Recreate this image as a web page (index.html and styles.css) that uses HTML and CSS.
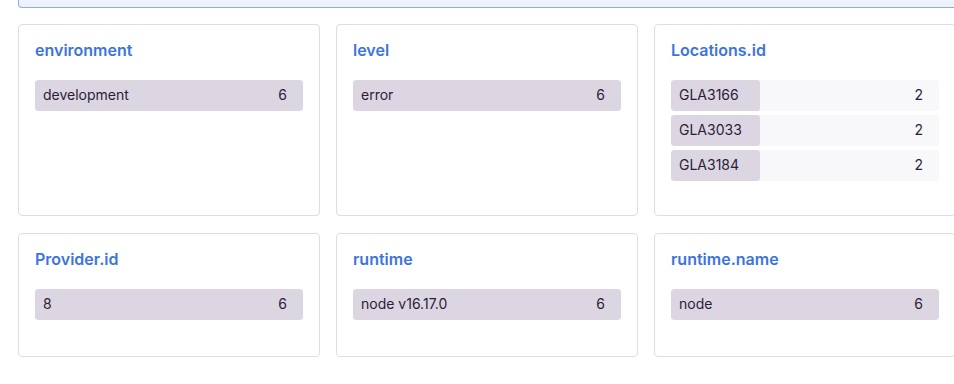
FILE: index.html
```html
<!DOCTYPE html>
<html lang="en">
<head>
  <meta charset="UTF-8">
  <meta name="viewport" content="width=device-width, initial-scale=1.0">
  <title>Tags</title>
  <link rel="stylesheet" href="styles.css">
</head>
<body>
  <div class="page">
    <div class="search-bar"></div>

    <div class="tag-grid">
      <div class="tag-card">
        <h3 class="tag-title">environment</h3>
        <div class="tag-values">
          <div class="tag-row">
            <div class="tag-fill" style="width: 100%"></div>
            <span class="tag-label">development</span>
            <span class="tag-count">6</span>
          </div>
        </div>
      </div>

      <div class="tag-card">
        <h3 class="tag-title">level</h3>
        <div class="tag-values">
          <div class="tag-row">
            <div class="tag-fill" style="width: 100%"></div>
            <span class="tag-label">error</span>
            <span class="tag-count">6</span>
          </div>
        </div>
      </div>

      <div class="tag-card">
        <h3 class="tag-title">Locations.id</h3>
        <div class="tag-values">
          <div class="tag-row">
            <div class="tag-fill" style="width: 33.3%"></div>
            <span class="tag-label">GLA3166</span>
            <span class="tag-count">2</span>
          </div>
          <div class="tag-row">
            <div class="tag-fill" style="width: 33.3%"></div>
            <span class="tag-label">GLA3033</span>
            <span class="tag-count">2</span>
          </div>
          <div class="tag-row">
            <div class="tag-fill" style="width: 33.3%"></div>
            <span class="tag-label">GLA3184</span>
            <span class="tag-count">2</span>
          </div>
        </div>
      </div>

      <div class="tag-card">
        <h3 class="tag-title">Provider.id</h3>
        <div class="tag-values">
          <div class="tag-row">
            <div class="tag-fill" style="width: 100%"></div>
            <span class="tag-label">8</span>
            <span class="tag-count">6</span>
          </div>
        </div>
      </div>

      <div class="tag-card">
        <h3 class="tag-title">runtime</h3>
        <div class="tag-values">
          <div class="tag-row">
            <div class="tag-fill" style="width: 100%"></div>
            <span class="tag-label">node v16.17.0</span>
            <span class="tag-count">6</span>
          </div>
        </div>
      </div>

      <div class="tag-card">
        <h3 class="tag-title">runtime.name</h3>
        <div class="tag-values">
          <div class="tag-row">
            <div class="tag-fill" style="width: 100%"></div>
            <span class="tag-label">node</span>
            <span class="tag-count">6</span>
          </div>
        </div>
      </div>
    </div>
  </div>
</body>
</html>
```

FILE: styles.css
```css
body {
  margin: 0;
  background: #fff;
  font-family: Inter, "Noto Sans", sans-serif;
  color: #2b1d38;
  overflow: hidden;
}

.page {
  padding: 0 0 0 18px;
  width: 938px;
}

/* bottom edge of the search box that sits above */
.search-bar {
  height: 7px;
  background: #edf2fc;
  border: 1px solid #92ace6;
  border-top: 0;
  border-radius: 0 0 4px 4px;
  margin-right: -40px;
}

.tag-grid {
  display: grid;
  grid-template-columns: repeat(3, 302px);
  gap: 17px 16px;
  margin-top: 16px;
}

.tag-card {
  box-sizing: border-box;
  min-height: 124px;
  border: 1px solid #e0dce5;
  border-radius: 4px;
  padding: 16px 16px 34px;
}

.tag-title {
  margin: 0 0 21px;
  font-size: 16px;
  line-height: 18px;
  font-weight: 600;
  color: #3d74db;
}

.tag-values {
  display: flex;
  flex-direction: column;
  gap: 4px;
}

.tag-row {
  box-sizing: border-box;
  position: relative;
  display: flex;
  align-items: center;
  justify-content: space-between;
  height: 31px;
  padding: 0 16px 3px 8px;
  background: #f8f7fa;
  border-radius: 3px;
  font-size: 14px;
  overflow: hidden;
}

.tag-fill {
  position: absolute;
  left: 0;
  top: 0;
  bottom: 0;
  background: #dcd6e2;
  border-radius: 3px;
}

.tag-label,
.tag-count {
  position: relative;
}
```
